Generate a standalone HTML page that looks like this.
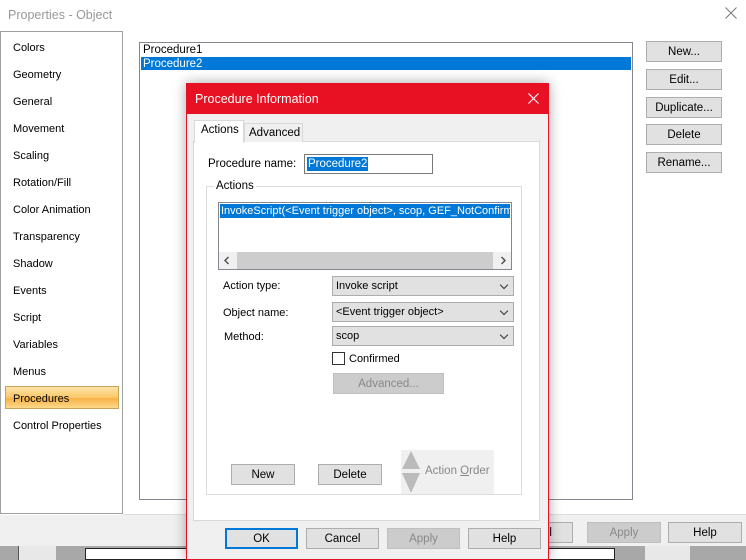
<!DOCTYPE html>
<html><head><style>
*{box-sizing:border-box;margin:0;padding:0}
body{width:746px;height:560px;position:relative;overflow:hidden;background:#fff;font-family:"Liberation Sans",sans-serif;font-size:11px;color:#000}
.a{position:absolute}
.btn{position:absolute;background:#e1e1e1;border:1px solid #adadad;text-align:center;font-size:11.5px;line-height:20px}
.li{position:absolute;left:13px;font-size:11px}
.cb{position:absolute;background:#e1e1e1;border:1px solid #adadad;height:20px;font-size:11px;line-height:19px;padding-left:3px}
.cb:after{content:"";position:absolute;right:6px;top:5px;width:5px;height:5px;border-right:1px solid #333;border-bottom:1px solid #333;transform:rotate(45deg)}
</style></head><body>
<div class="a" style="left:8px;top:8px;font-size:12.5px;color:#999">Properties - Object</div>
<svg class="a" style="left:725px;top:7px" width="12" height="12"><path d="M0.5 0.5L11.5 11.5M11.5 0.5L0.5 11.5" stroke="#777" stroke-width="1"/></svg>
<div class="a" style="left:0;top:31px;width:123px;height:483px;border:1px solid #a0a0a0;background:#fff"></div>
<div class="li" style="top:42px">Colors</div>
<div class="li" style="top:69px">Geometry</div>
<div class="li" style="top:96px">General</div>
<div class="li" style="top:123px">Movement</div>
<div class="li" style="top:150px">Scaling</div>
<div class="li" style="top:177px">Rotation/Fill</div>
<div class="li" style="top:204px">Color Animation</div>
<div class="li" style="top:231px">Transparency</div>
<div class="li" style="top:258px">Shadow</div>
<div class="li" style="top:285px">Events</div>
<div class="li" style="top:312px">Script</div>
<div class="li" style="top:339px">Variables</div>
<div class="li" style="top:366px">Menus</div>
<div class="a" style="left:5px;top:386px;width:114px;height:23px;border:1px solid #c9a35a;background:linear-gradient(#fde3a8,#fbc868 50%,#f8b248 55%,#fdd98a)"></div>
<div class="li" style="top:393px">Procedures</div>
<div class="li" style="top:420px">Control Properties</div>
<div class="a" style="left:123px;top:514px;width:623px;height:1px;background:#ddd"></div>
<div class="a" style="left:0;top:515px;width:746px;height:31px;background:#f0f0f0"></div>
<div class="a" style="left:0;top:546px;width:746px;height:14px;background:#a8a8a8"></div>
<div class="a" style="left:18px;top:546px;width:38px;height:14px;background:#e8e8e8;border-left:1px solid #555"></div>
<div class="a" style="left:85px;top:548px;width:530px;height:12px;background:#fff;border:1px solid #222"></div>
<div class="a" style="left:645px;top:546px;width:45px;height:14px;background:#e8e8e8"></div>
<div class="a" style="left:139px;top:42px;width:494px;height:458px;border:1px solid #828790;background:#fff"></div>
<div class="a" style="left:143px;top:44px;font-size:11.5px">Procedure1</div>
<div class="a" style="left:141px;top:57px;width:490px;height:13px;background:#0078d7;color:#fff;font-size:11.5px;padding-left:2px;line-height:14px">Procedure2</div>
<div class="btn" style="left:646px;top:41px;width:76px;height:21px">New...</div>
<div class="btn" style="left:646px;top:69px;width:76px;height:21px">Edit...</div>
<div class="btn" style="left:646px;top:97px;width:76px;height:21px">Duplicate...</div>
<div class="btn" style="left:646px;top:124px;width:76px;height:21px">Delete</div>
<div class="btn" style="left:646px;top:152px;width:76px;height:21px">Rename...</div>
<div class="btn" style="left:511px;top:522px;width:62px;height:21px;text-align:right;padding-right:20px">Cancel</div>
<div class="btn" style="left:587px;top:522px;width:74px;height:21px;background:#ccc;border-color:#bfbfbf;color:#888">Apply</div>
<div class="btn" style="left:668px;top:522px;width:74px;height:21px">Help</div>
<!-- dialog -->
<div class="a" style="left:186px;top:83px;width:363px;height:477px;background:#f0f0f0;border:1px solid #e81123;box-shadow:0 0 12px rgba(0,0,0,.35)"></div>
<div class="a" style="left:186px;top:83px;width:363px;height:31px;background:#e81123"></div>
<div class="a" style="left:195px;top:92px;color:#fff;font-size:12.5px">Procedure Information</div>
<svg class="a" style="left:528px;top:93px" width="11" height="11"><path d="M0.5 0.5L10.5 10.5M10.5 0.5L0.5 10.5" stroke="#fff" stroke-width="1.2"/></svg>
<div class="a" style="left:193px;top:141px;width:347px;height:380px;background:#fff;border:1px solid #d9d9d9"></div>
<div class="a" style="left:244px;top:123px;width:59px;height:19px;background:#f0f0f0;border:1px solid #d9d9d9;border-bottom:none;padding:3px 0 0 4px;font-size:11.5px">Advanced</div>
<div class="a" style="left:194px;top:120px;width:50px;height:23px;background:#fff;border:1px solid #d9d9d9;border-bottom:none;padding:3px 0 0 6px;font-size:11.5px">Actions</div>
<div class="a" style="left:208px;top:158px;font-size:11.5px">Procedure name:</div>
<div class="a" style="left:304px;top:154px;width:129px;height:20px;border:1px solid #7a7a7a;background:#fff"></div>
<div class="a" style="left:307px;top:157px;background:#0078d7;color:#fff;font-size:11.5px;line-height:14px;padding:0 1px">Procedure2</div>
<div class="a" style="left:206px;top:186px;width:316px;height:309px;border:1px solid #dcdcdc"></div>
<div class="a" style="left:214px;top:180px;background:#fff;padding:0 2px;font-size:11.5px">Actions</div>
<div class="a" style="left:218px;top:202px;width:294px;height:68px;border:1px solid #828790;background:#fff;overflow:hidden"></div>
<div class="a" style="left:220px;top:204px;width:290px;height:14px;background:#0078d7;color:#fff;font-size:11px;line-height:14px;white-space:nowrap;overflow:hidden;padding-left:1px">InvokeScript(&lt;Event trigger object&gt;, scop, GEF_NotConfirmed)</div>
<div class="a" style="left:219px;top:252px;width:292px;height:17px;background:#f0f0f0"></div>
<div class="a" style="left:237px;top:252px;width:256px;height:17px;background:#cdcdcd"></div>
<svg class="a" style="left:223px;top:256px" width="8" height="9"><path d="M5.5 1L2 4.5L5.5 8" stroke="#555" stroke-width="1.5" fill="none"/></svg>
<svg class="a" style="left:499px;top:256px" width="8" height="9"><path d="M2.5 1L6 4.5L2.5 8" stroke="#555" stroke-width="1.5" fill="none"/></svg>
<div class="a" style="left:223px;top:280px">Action type:</div>
<div class="a" style="left:223px;top:307px">Object name:</div>
<div class="a" style="left:224px;top:331px">Method:</div>
<div class="cb" style="left:332px;top:276px;width:182px">Invoke script</div>
<div class="cb" style="left:332px;top:302px;width:182px">&lt;Event trigger object&gt;</div>
<div class="cb" style="left:332px;top:326px;width:182px">scop</div>
<div class="a" style="left:332px;top:352px;width:13px;height:13px;border:1px solid #333;background:#fff"></div>
<div class="a" style="left:349px;top:353px">Confirmed</div>
<div class="btn" style="left:333px;top:373px;width:111px;height:21px;background:#ccc;border-color:#bfbfbf;color:#888">Advanced...</div>
<div class="btn" style="left:231px;top:464px;width:64px;height:21px">New</div>
<div class="btn" style="left:318px;top:464px;width:64px;height:21px">Delete</div>
<div class="a" style="left:401px;top:450px;width:93px;height:44px;background:#f0f0f0"></div>
<svg class="a" style="left:401px;top:450px" width="20" height="44"><polygon points="10,1 19,19 1,19" fill="#bbb"/><polygon points="1,23 19,23 10,43" fill="#bbb"/></svg>
<div class="a" style="left:425px;top:465px;color:#888;font-size:11.5px">Action <u>O</u>rder</div>
<div class="btn" style="left:225px;top:528px;width:73px;height:21px;border:2px solid #0078d7;line-height:18px">OK</div>
<div class="btn" style="left:306px;top:528px;width:73px;height:21px">Cancel</div>
<div class="btn" style="left:387px;top:528px;width:73px;height:21px;background:#ccc;border-color:#bfbfbf;color:#888">Apply</div>
<div class="btn" style="left:468px;top:528px;width:73px;height:21px">Help</div>
</body></html>
